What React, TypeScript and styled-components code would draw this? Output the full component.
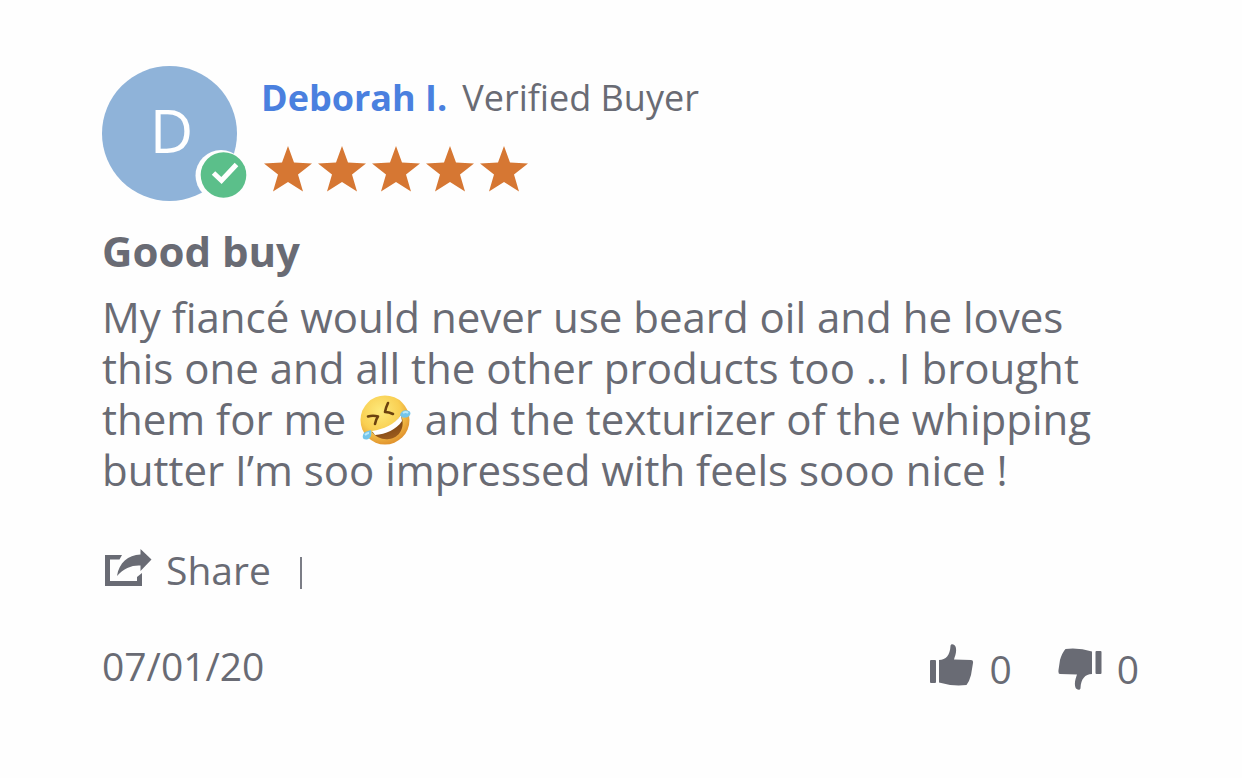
import React from "react";
import styled, { createGlobalStyle } from "styled-components";

const GlobalStyle = createGlobalStyle`
  * { box-sizing: border-box; }
  body {
    margin: 0;
    background: #fefefe;
    color: #696b74;
    font-family: "Open Sans", "Noto Sans", sans-serif;
  }
`;

const Review = styled.article`
  padding: 66px 102px 72px;
`;

const Header = styled.header`
  display: flex;
  gap: 24px;
`;

const Avatar = styled.div`
  position: relative;
  flex: none;
  display: flex;
  align-items: center;
  justify-content: center;
  width: 135px;
  height: 135px;
  border-radius: 50%;
  background: #8fb3d9;
  color: #fff;
  font-size: 60px;
  line-height: 60px;
  padding: 0 0 8px 4px;
`;

const Badge = styled.svg`
  position: absolute;
  right: -10px;
  bottom: 0;
  width: 52px;
  height: 52px;
`;

const Identity = styled.div`
  padding-top: 8px;
`;

const NameLine = styled.div`
  display: flex;
  gap: 15px;
  font-size: 36px;
  line-height: 48px;
`;

const Name = styled.span`
  color: #4a80df;
  font-weight: 700;
`;

const Stars = styled.div`
  display: flex;
  gap: 6px;
  margin-top: 24px;
  padding-left: 3px;
`;

const StarIcon = styled.svg`
  width: 48px;
  height: 46px;
  fill: #d67733;
`;

const Title = styled.h2`
  margin: 24px 0 0;
  font-size: 42px;
  line-height: 51px;
  font-weight: 700;
`;

const Body = styled.p`
  margin: 15px 0 0;
  font-size: 42px;
  line-height: 51px;
`;

const Emoji = styled.svg`
  width: 52px;
  height: 50px;
  margin: -6px 2px -6px 3px;
  vertical-align: -4px;
`;

const ShareRow = styled.div`
  display: flex;
  align-items: center;
  gap: 29px;
  margin-top: 50px;
  padding-left: 3px;
`;

const TextButton = styled.button<{ $gap: number }>`
  display: flex;
  align-items: center;
  gap: ${(p) => p.$gap}px;
  padding: 0;
  border: 0;
  background: none;
  color: inherit;
  font: inherit;
  font-size: 39px;
  line-height: 50px;
  cursor: pointer;
`;

const Divider = styled.span`
  width: 2px;
  height: 32px;
  margin-top: 5px;
  background: #7b7d86;
`;

const Footer = styled.footer`
  display: flex;
  justify-content: space-between;
  align-items: flex-start;
  margin-top: 46px;
  font-size: 39px;
  line-height: 50px;
`;

const Votes = styled.div`
  display: flex;
  gap: 46px;
  padding: 3px 1px 0 0;
`;

const Icon = styled.svg<{ $raise?: number }>`
  fill: currentColor;
  flex: none;
  margin-bottom: ${(p) => p.$raise ?? 0}px;
`;

const Star = () => (
  <StarIcon viewBox="0 0 48 46" aria-hidden="true">
    <path d="M24 0 30 16.500 48 17.500 34 28.500 39 45.500 24 36 9 45.500 14 28.500 0 17.500 18 16.500Z" />
  </StarIcon>
);

const LaughingEmoji = () => (
  <Emoji viewBox="0 0 52 50" role="img" aria-label="rolling on the floor laughing">
    <defs>
      <radialGradient id="face" cx="40%" cy="32%" r="68%">
        <stop offset="0" stopColor="#fdea7c" />
        <stop offset="0.6" stopColor="#f9cf52" />
        <stop offset="1" stopColor="#e2952f" />
      </radialGradient>
      <linearGradient id="mouth" x1="0" y1="0" x2="0.4" y2="1">
        <stop offset="0" stopColor="#5a2d0c" />
        <stop offset="1" stopColor="#9a5a1c" />
      </linearGradient>
    </defs>
    <circle cx="25" cy="25" r="24.500" fill="url(#face)" />
    <path d="M12 37C24 36 34 31 41 20C46 33 39 43 29 44C22 45 16 42 12 37Z" fill="url(#mouth)" />
    <path d="M12 36C24 34 34 30 41 20L42 26C36 35 26 39 15 40Z" fill="#fff" />
    <g fill="none" stroke="#6b420f" strokeWidth="2.600" strokeLinecap="round" strokeLinejoin="round">
      <path d="M8 21.500Q13 20 18 21.500Q16 24 15 29" />
      <path d="M28 8Q26 12 25 17Q29 17 33 19" />
    </g>
    <path d="M40 20C41 16 45 14 49 16C52 18 50 22 46 22.500C43 23 41 22 40 20Z" fill="#74c5ea" />
    <path d="M11 35C12 39 11 44 7 44.500C2 45 2 41 4 38C6 36 9 36 11 35Z" fill="#74c5ea" />
    <path d="M43 18Q46 16 48 18" fill="none" stroke="#b8e8fa" strokeWidth="2" />
    <path d="M5 40Q7 38 9 38" fill="none" stroke="#b8e8fa" strokeWidth="2" />
  </Emoji>
);

const ShareIcon = () => (
  <Icon $raise={4} width="47" height="38" viewBox="0 0 47 38" aria-hidden="true">
    <path d="M0 6H17L14.500 10.500H5V32H32V28L37 24V37H0Z" />
    <path d="M35.500 0 46.500 10.500 35.500 22V16.500C27 16 19 19 12 27C14 14 23 6 35.500 5.500Z" />
  </Icon>
);

const ThumbUp = () => (
  <Icon $raise={8} width="44" height="42" viewBox="0 0 44 42" aria-hidden="true">
    <rect x="0" y="16" width="6" height="23" rx="1" />
    <path d="M9 16C16 16 20 11 20.500 2C20.500-1 25 0 25.700 3C27 8 25 12 24 15.500L41 16Q43.500 16 43 19L41 31Q39.500 37 36.500 41Q22 42.500 9 38.500Z" />
  </Icon>
);

const ThumbDown = () => (
  <Icon width="44" height="42" viewBox="0 0 44 42" aria-hidden="true">
    <rect x="37.500" y="3" width="6" height="23" rx="1" />
    <path d="M34 26C27 26 23 31 22.500 40C22.500 43 18 42 17.300 39C16 34 18 30 19 26.500L2 26Q0 26 .500 22L2 12Q4 5 7.500 1Q21-.500 34 3.500Z" />
  </Icon>
);

export default function App() {
  return (
    <>
      <GlobalStyle />
      <Review>
        <Header>
          <Avatar>
            D
            <Badge viewBox="0 0 52 52" aria-hidden="true">
              <circle cx="26" cy="26.500" r="25.500" fill="#fefefe" />
              <circle cx="28.500" cy="26" r="22.800" fill="#5bbf8a" />
              <path d="m18.500 24 8 7.500L41.500 15.500" fill="none" stroke="#fff" strokeWidth="5" />
            </Badge>
          </Avatar>
          <Identity>
            <NameLine>
              <Name>Deborah I.</Name>
              <span>Verified Buyer</span>
            </NameLine>
            <Stars role="img" aria-label="5 out of 5 stars">
              {[1, 2, 3, 4, 5].map((n) => (
                <Star key={n} />
              ))}
            </Stars>
          </Identity>
        </Header>
        <Title>Good buy</Title>
        <Body>
          My fiancé would never use beard oil and he loves this one and all the other products too .. I
          brought them for me <LaughingEmoji /> and the texturizer of the whipping butter I’m soo
          impressed with feels sooo nice !
        </Body>
        <ShareRow>
          <TextButton $gap={14} type="button">
            <ShareIcon />
            Share
          </TextButton>
          <Divider />
        </ShareRow>
        <Footer>
          <time dateTime="2020-07-01">07/01/20</time>
          <Votes>
            <TextButton $gap={15} type="button" aria-label="Helpful, 0 votes">
              <ThumbUp />0
            </TextButton>
            <TextButton $gap={15} type="button" aria-label="Not helpful, 0 votes">
              <ThumbDown />0
            </TextButton>
          </Votes>
        </Footer>
      </Review>
    </>
  );
}
